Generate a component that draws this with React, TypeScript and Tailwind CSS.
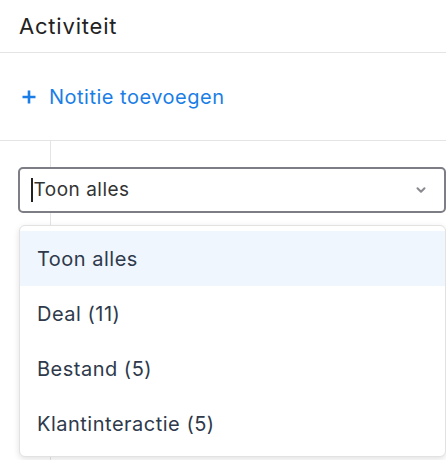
import { ChevronDown } from "lucide-react";

const OPTIONS = ["Toon alles", "Deal (11)", "Bestand (5)", "Klantinteractie (5)"];

export default function App() {
  return (
    <div
      className="relative h-[460px] w-[446px] overflow-hidden bg-white"
      style={{ fontFamily: "Inter, 'Noto Sans', sans-serif" }}
    >
      <div className="flex h-[53px] items-center border-b border-[#e4e4e4] px-[19px]">
        <h1 className="text-[22px] tracking-[0.8px] text-[#222]">Activiteit</h1>
      </div>

      <div className="flex h-[88px] items-center border-b border-[#e4e4e4] pl-[22px]">
        <button className="flex items-center gap-[13px] text-[20px] tracking-[0.5px] text-[#1a7ee6]">
          <svg width="14" height="14" viewBox="0 0 14 14">
            <path d="M7 0.5v13M0.5 7h13" stroke="currentColor" strokeWidth="2.6" />
          </svg>
          Notitie toevoegen
        </button>
      </div>

      <div className="relative">
        <div className="absolute left-[50px] top-0 h-[330px] w-px bg-[#e4e4e4]" />
        <div className="relative pl-[18px] pt-[26px]">
          <div className="flex h-[46px] items-center justify-between rounded-[5px] border-2 border-[#7d7d85] bg-white pl-[11px] pr-[16px]">
            <span className="flex items-center text-[19px] tracking-[0.5px] text-[#333]">
              <span className="mr-px h-[24px] w-[1.5px] bg-[#222]" />
              Toon alles
            </span>
            <ChevronDown size={14} strokeWidth={3.5} className="text-[#8a8a90]" />
          </div>

          <div className="ml-px mt-[12px] rounded-[6px] border border-[#e2e2e2] bg-white py-[5px] shadow-[0_2px_6px_rgba(0,0,0,0.12)]">
            {OPTIONS.map((o, i) => (
              <div
                key={o}
                className={[
                  "flex h-[55px] items-center px-[17px] text-[20px] tracking-[0.5px] text-[#2e3a4b]",
                  i === 0 ? "bg-[#eff6fe]" : "",
                ].join(" ")}
              >
                {o}
              </div>
            ))}
          </div>
        </div>
      </div>
    </div>
  );
}
